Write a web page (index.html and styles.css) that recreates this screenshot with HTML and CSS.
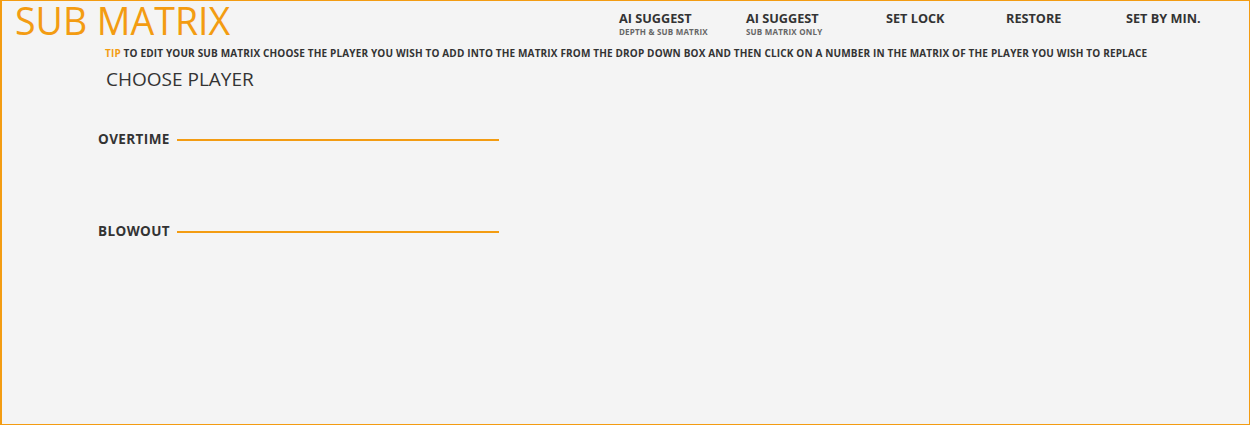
FILE: index.html
```html
<!DOCTYPE html>
<html>
<head>
<meta charset="utf-8">
<link rel="stylesheet" href="styles.css">
</head>
<body>
<div class="frame">
  <header class="top">
    <h1 class="title">SUB MATRIX</h1>
    <nav class="nav">
      <div class="nav-item n1"><span class="lbl">AI SUGGEST</span><span class="sub">DEPTH &amp; SUB MATRIX</span></div>
      <div class="nav-item n2"><span class="lbl">AI SUGGEST</span><span class="sub">SUB MATRIX ONLY</span></div>
      <div class="nav-item n3"><span class="lbl">SET LOCK</span></div>
      <div class="nav-item n4"><span class="lbl">RESTORE</span></div>
      <div class="nav-item n5"><span class="lbl">SET BY MIN.</span></div>
    </nav>
  </header>
  <p class="tip"><span class="tip-key">TIP</span> TO EDIT YOUR SUB MATRIX CHOOSE THE PLAYER YOU WISH TO ADD INTO THE MATRIX FROM THE DROP DOWN BOX AND THEN CLICK ON A NUMBER IN THE MATRIX OF THE PLAYER YOU WISH TO REPLACE</p>
  <div class="choose">CHOOSE PLAYER</div>
  <section class="group g1">
    <div class="group-head"><span class="group-name">OVERTIME</span><span class="rule"></span></div>
  </section>
  <section class="group g2">
    <div class="group-head"><span class="group-name">BLOWOUT</span><span class="rule"></span></div>
  </section>
</div>
</body>
</html>
```

FILE: styles.css
```css
* { box-sizing: border-box; }
html, body { margin: 0; padding: 0; }
body {
  width: 1250px;
  height: 425px;
  font-family: "Open Sans", "Liberation Sans", sans-serif;
  color: #333;
  background: #f4f4f4;
}
.frame {
  width: 1250px;
  height: 425px;
  border: 1px solid #f39c12;
  border-left-width: 2px;
  background: #f4f4f4;
  overflow: hidden;
}
.top {
  display: flex;
  align-items: flex-start;
  height: 40px;
}
.title {
  margin: 0;
  padding: 0 0 0 13px;
  font-size: 37.5px;
  font-weight: 400;
  line-height: 40px;
  color: #f39c12;
  width: 617px;
  flex: none;
}
.nav {
  display: flex;
  padding-top: 9px;
}
.nav-item {
  display: flex;
  flex-direction: column;
  flex: none;
}
.n1 { width: 127px; }
.n2 { width: 140px; }
.n3 { width: 120px; }
.n4 { width: 120px; }
.lbl {
  font-size: 12.7px;
  font-weight: 700;
  line-height: 17px;
  color: #333;
}
.sub {
  font-size: 8px;
  font-weight: 700;
  line-height: 9px;
  color: #666;
  letter-spacing: 0.2px;
}
.tip {
  margin: 6px 0 0 103px;
  font-size: 10px;
  font-weight: 700;
  line-height: 13px;
  color: #333;
  white-space: nowrap;
  letter-spacing: 0.155px;
}
.tip-key { color: #f39c12; }
.choose {
  margin: 6px 0 0 104px;
  font-size: 19px;
  line-height: 26px;
  color: #333;
}
.group { padding-left: 96px; }
.g1 { margin-top: 38px; height: 92px; }
.group-head {
  display: flex;
  align-items: center;
  height: 18px;
}
.group-name {
  font-size: 13.5px;
  font-weight: 700;
  color: #333;
  letter-spacing: 0.4px;
  margin-right: 7px;
}
.rule {
  display: block;
  width: 322px;
  height: 2px;
  background: #f39c12;
  margin-top: 2px;
}
```
